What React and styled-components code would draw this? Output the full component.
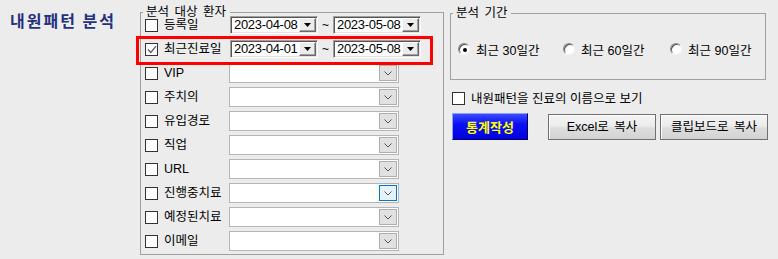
import React from 'react';
import styled, {createGlobalStyle} from 'styled-components';

const GlobalStyle = createGlobalStyle`
  html, body {
    margin: 0;
    padding: 0;
    background: #ececec;
  }
  body {
    font-family: "Liberation Sans", "Noto Sans CJK KR", sans-serif;
    font-size: 12px;
    color: #000;
  }
`;

const Page = styled.div`
  display: flex;
  align-items: flex-start;
  width: 778px;
  height: 259px;
  background: #ececec;
  overflow: hidden;
`;

const Title = styled.h1`
  margin: 0;
  width: 130px;
  padding: 10px 0 0 10px;
  font-family: "Noto Sans CJK KR", sans-serif;
  font-size: 16px;
  font-weight: bold;
  line-height: 20px;
  letter-spacing: 2px;
  color: #25307f;
  white-space: nowrap;
`;

const GroupBox = styled.div`
  position: relative;
  box-sizing: border-box;
  width: ${p => p.$w}px;
  height: ${p => p.$h}px;
  margin-top: ${p => p.$top || 0}px;
  border: 1px solid #a0a0a0;
`;

const Legend = styled.span`
  position: absolute;
  top: -9px;
  left: 2px;
  padding: 0 4px 0 3px;
  background: #ececec;
  font-size: 12.5px;
  line-height: 16px;
  word-spacing: 2px;
  white-space: nowrap;
`;

const Highlight = styled.div`
  position: absolute;
  left: -5px;
  top: 23px;
  width: 297px;
  height: 29px;
  box-sizing: border-box;
  border: 3px solid #ff0000;
  pointer-events: none;
`;

const RowList = styled.div`
  position: relative;
  display: flex;
  flex-direction: column;
  gap: 4px;
  padding: 2px 0 0 4px;
`;

const Row = styled.div`
  display: flex;
  align-items: center;
  height: 20px;
`;

const CheckSquare = styled.span`
  box-sizing: border-box;
  width: 13px;
  height: 13px;
  flex-shrink: 0;
  border: 1px solid #333;
  background: #fff;
  display: inline-flex;
  align-items: center;
  justify-content: center;
`;

const Label = styled.span`
  width: ${p => p.$w || 65}px;
  margin-left: 6px;
  font-size: 12.5px;
  line-height: 20px;
  white-space: nowrap;
`;

const DateBox = styled.div`
  box-sizing: border-box;
  width: 88px;
  height: 18px;
  margin-left: ${p => p.$ml || 0}px;
  display: flex;
  align-items: center;
  justify-content: space-between;
  background: #fff;
  border: 1px solid;
  border-color: #a0a0a0 #fff #fff #a0a0a0;
  box-shadow: inset 1px 1px 0 #555, inset -1px -1px 0 #e3e3e3;
  padding: 1px 1px 1px 3px;
`;

const DateText = styled.span`
  font-family: "Liberation Sans", sans-serif;
  font-size: 13px;
  letter-spacing: -0.3px;
  line-height: 14px;
`;

const DropButton = styled.span`
  box-sizing: border-box;
  width: 17px;
  height: 14px;
  display: flex;
  align-items: center;
  justify-content: center;
  background: #ececec;
  border: 1px solid;
  border-color: #fff #696969 #696969 #fff;
  box-shadow: inset -1px -1px 0 #a0a0a0;
`;

const Tilde = styled.span`
  width: 15px;
  text-align: center;
  font-size: 12px;
  line-height: 18px;
`;

const Combo = styled.div`
  box-sizing: border-box;
  width: 170px;
  height: 20px;
  display: flex;
  align-items: center;
  justify-content: flex-end;
  padding-right: 1px;
  background: #fff;
  border: 1px solid #b5b5b5;
`;

const ComboButton = styled.span`
  box-sizing: border-box;
  width: 18px;
  height: 16px;
  display: flex;
  align-items: center;
  justify-content: center;
  border: 1px solid ${p => (p.$hover ? '#0078d7' : '#adadad')};
  background: ${p => (p.$hover ? '#e5f1fb' : '#e1e1e1')};
`;

const RightColumn = styled.div`
  display: flex;
  flex-direction: column;
  margin-left: 6px;
  padding-top: 13px;
`;

const RadioRow = styled.div`
  display: flex;
  align-items: center;
  margin-top: 29px;
  padding-left: 7px;
  height: 12px;
`;

const RadioItem = styled.label`
  display: flex;
  align-items: center;
  width: ${p => p.$w}px;
  font-size: 12.5px;
  white-space: nowrap;
`;

const RadioCircle = styled.span`
  box-sizing: border-box;
  width: 12px;
  height: 12px;
  border-radius: 50%;
  border: 1px solid;
  border-color: #8a8a8a #f4f4f4 #f4f4f4 #8a8a8a;
  box-shadow: inset 1px 1px 0 #505050;
  background: #fff;
  display: flex;
  align-items: center;
  justify-content: center;
  margin-right: 6px;
  flex-shrink: 0;

  &::after {
    content: '';
    display: ${p => (p.$on ? 'block' : 'none')};
    width: 4px;
    height: 4px;
    border-radius: 50%;
    background: #000;
    margin: 1px 0 0 1px;
  }
`;

const OptionRow = styled.div`
  display: flex;
  align-items: center;
  height: 13px;
  margin-top: 12px;
  padding-left: 2px;
`;

const ButtonRow = styled.div`
  display: flex;
  align-items: flex-start;
  margin-top: 8px;
  padding-left: 2px;
`;

const RunButton = styled.button`
  box-sizing: border-box;
  width: 76px;
  height: 27px;
  padding: 0;
  border: 1px solid;
  border-color: #8fa0ff #000060 #000060 #8fa0ff;
  background: linear-gradient(#3c4cff, #0a10f4 40%, #0000e0);
  color: #ffff00;
  font-family: "Noto Sans CJK KR", sans-serif;
  font-size: 13px;
  font-weight: bold;
  line-height: 25px;
`;

const PlainButton = styled.button`
  box-sizing: border-box;
  width: 108px;
  height: 26px;
  margin-top: 1px;
  margin-left: ${p => p.$ml}px;
  padding: 0;
  border: 1px solid #707070;
  background: linear-gradient(#f4f4f4, #ececec 45%, #dddddd 55%, #d3d3d3);
  box-shadow: inset 1px 1px 0 #fcfcfc;
  color: #000;
  font-family: "Liberation Sans", "Noto Sans CJK KR", sans-serif;
  font-size: 12.5px;
  line-height: 24px;
  word-spacing: 2px;
`;

const CheckBox = ({checked}) => (
  <CheckSquare>
    {checked && (
      <svg width="10" height="9" viewBox="0 0 10 9">
        <polyline points="1,4.5 3.8,7.5 9,1.2" fill="none" stroke="#5a5a5a" strokeWidth="1.2" />
      </svg>
    )}
  </CheckSquare>
);

const DateField = ({value, ml}) => (
  <DateBox $ml={ml}>
    <DateText>{value}</DateText>
    <DropButton>
      <svg width="7" height="4" viewBox="0 0 7 4">
        <polygon points="0,0 7,0 3.5,4" fill="#000" />
      </svg>
    </DropButton>
  </DateBox>
);

const dateRows = [
  {label: '등록일', from: '2023-04-08', to: '2023-05-08'},
  {label: '최근진료일', from: '2023-04-01', to: '2023-05-08', checked: true},
];

const comboRows = ['VIP', '주치의', '유입경로', '직업', 'URL', '진행중치료', '예정된치료', '이메일'];

const periods = [
  {text: '최근 30일간', w: 105, on: true},
  {text: '최근 60일간', w: 107},
  {text: '최근 90일간', w: 90},
];

export default function App() {
  return (
    <>
      <GlobalStyle />
      <Page>
        <Title>내원패턴 분석</Title>

        <GroupBox $w={304} $h={243} $top={12}>
          <Legend>분석 대상 환자</Legend>
          <RowList>
            {dateRows.map(r => (
              <Row key={r.label}>
                <CheckBox checked={r.checked} />
                <Label>{r.label}</Label>
                <DateField value={r.from} ml={1} />
                <Tilde>~</Tilde>
                <DateField value={r.to} />
              </Row>
            ))}
            {comboRows.map((label, i) => (
              <Row key={label}>
                <CheckBox />
                <Label>{label}</Label>
                <Combo>
                  <ComboButton $hover={i === 5}>
                    <svg width="8" height="5" viewBox="0 0 8 5">
                      <polyline points="0.5,0.5 4,4 7.5,0.5" fill="none" stroke="#555" strokeWidth="1" />
                    </svg>
                  </ComboButton>
                </Combo>
              </Row>
            ))}
          </RowList>
          <Highlight />
        </GroupBox>

        <RightColumn>
          <GroupBox $w={316} $h={67}>
            <Legend>분석 기간</Legend>
            <RadioRow>
              {periods.map(p => (
                <RadioItem key={p.text} $w={p.w}>
                  <RadioCircle $on={p.on} />
                  {p.text}
                </RadioItem>
              ))}
            </RadioRow>
          </GroupBox>

          <OptionRow>
            <CheckBox />
            <Label $w={200}>내원패턴을 진료의 이름으로 보기</Label>
          </OptionRow>

          <ButtonRow>
            <RunButton>통계작성</RunButton>
            <PlainButton $ml={20}>Excel로 복사</PlainButton>
            <PlainButton $ml={4}>클립보드로 복사</PlainButton>
          </ButtonRow>
        </RightColumn>
      </Page>
    </>
  );
}
